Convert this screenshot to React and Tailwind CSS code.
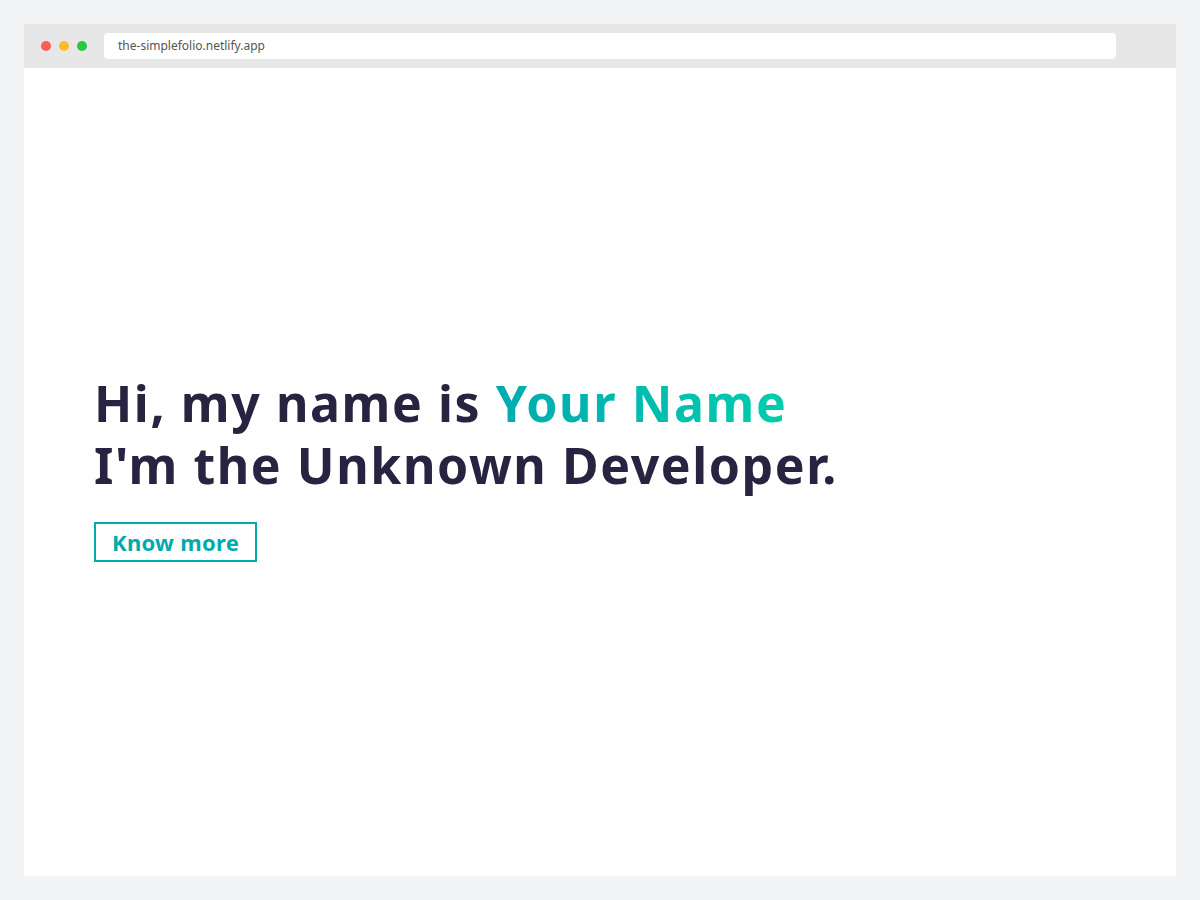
import React from "react";

export default function App() {
  return (
    <div className="w-[1200px] h-[900px] bg-[#f3f4f6] p-6 font-['Open_Sans',sans-serif]">
      <div className="h-full flex flex-col bg-white">
        <div className="h-11 bg-[#e7e7e7] flex items-center pl-[17px] pr-[60px]">
          <div className="flex gap-[8px]">
            <span className="w-[10px] h-[10px] rounded-full bg-[#fd5f57]" />
            <span className="w-[10px] h-[10px] rounded-full bg-[#fdbc2f]" />
            <span className="w-[10px] h-[10px] rounded-full bg-[#28c840]" />
          </div>
          <div className="ml-[17px] flex-1 h-[26px] bg-white rounded-[4px] flex items-center px-[14px] text-[12px] text-[#555] font-['Liberation_Sans',sans-serif]">
            the-simplefolio.netlify.app
          </div>
        </div>
        <div className="flex-1 flex flex-col justify-center px-[70px] pb-[10px]">
          <h1 className="text-[50px] leading-[62px] font-bold text-[#272341] tracking-[1.6px]">
            Hi, my name is{" "}
            <span className="bg-gradient-to-r from-[#02aab0] to-[#00cdac] bg-clip-text text-transparent">Your Name</span>
            <br />
            I'm the Unknown Developer.
          </h1>
          <div className="mt-[26px]">
            <button className="h-[40px] px-[16px] border-2 border-[#02aab0] text-[22px] font-bold text-[#02aab0] leading-none tracking-[0.3px]">
              Know more
            </button>
          </div>
        </div>
      </div>
    </div>
  );
}
